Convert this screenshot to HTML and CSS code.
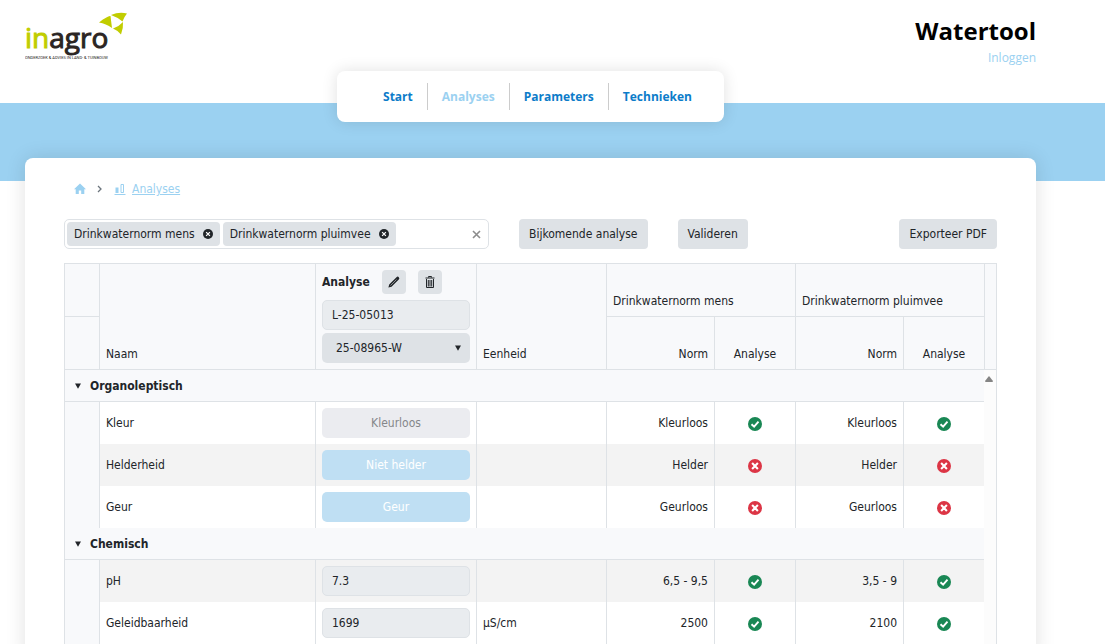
FILE: index.html
```html
<!DOCTYPE html>
<html lang="nl">
<head>
<meta charset="utf-8">
<title>Watertool - Analyses</title>
<link rel="stylesheet" href="styles.css">
</head>
<body>
<svg class="sprite" aria-hidden="true">
  <symbol id="ok" viewBox="0 0 16 16"><circle cx="8" cy="8" r="8" fill="#198754"/><path d="M4 8.2 7 11l5-5.600" fill="none" stroke="#fff" stroke-width="2.200"/></symbol>
  <symbol id="bad" viewBox="0 0 16 16"><circle cx="8" cy="8" r="8" fill="#dc3545"/><path d="m4.700 4.700 6.600 6.600M11.300 4.700l-6.600 6.600" fill="none" stroke="#fff" stroke-width="2.400"/></symbol>
  <symbol id="remove" viewBox="0 0 16 16"><circle cx="8" cy="8" r="8" fill="#212529"/><path d="m5 5 6 6M11 5l-6 6" fill="none" stroke="#fff" stroke-width="2"/></symbol>
  <symbol id="caret" viewBox="0 0 8 8"><path d="M1 1.500h6L4 6.800z" fill="#212529"/></symbol>
</svg>
<div class="page">
  <header class="header">
    <a class="logo" href="#" aria-label="Inagro">
      <svg width="104" height="52" viewBox="0 0 104 52">
        <text class="logo-name" x="0" y="37"><tspan class="logo-green">in</tspan><tspan class="logo-dark">agro</tspan></text>
        <path d="M74 11.500C80 6 86 4.500 85.500 5L87 17Q81 12.500 74 11.500zM86 4Q94 .5 102 2.500 99 6 97.500 10.500 92 6 86 4zM98 11Q98.500 17 96 23.500 92 19 88 17.500 94 15.500 98 11z" fill="#c1cd00"/>
        <text class="logo-tagline" x="0" y="48">ONDERZOEK &amp; ADVIES IN LAND- &amp; TUINBOUW</text>
      </svg>
    </a>
    <div class="brand">
      <h1 class="brand-title">Watertool</h1>
      <a class="login" href="#">Inloggen</a>
    </div>
  </header>
  <div class="band">
    <nav class="nav">
      <a class="nav-link" href="#">Start</a>
      <a class="nav-link active" href="#">Analyses</a>
      <a class="nav-link" href="#">Parameters</a>
      <a class="nav-link" href="#">Technieken</a>
    </nav>
  </div>
  <main class="card">
    <nav class="crumbs" aria-label="Kruimelpad">
      <a class="crumb" href="#" aria-label="Start"><svg width="12" height="12" viewBox="0 0 12 12"><path d="M6 .5 12 6.300h-1.700V11H7.200V7.500H4.800V11H1.700V6.300H0z" fill="#9bd1f1"/></svg></a>
      <svg width="6" height="8" viewBox="0 0 6 8"><path d="m1 1 3 3-3 3" fill="none" stroke="#6c757d" stroke-width="1.300"/></svg>
      <a class="crumb crumb-text" href="#"><svg width="12" height="12" viewBox="0 0 12 12"><path d="M1.500 4.500h3V10h-3z" fill="#9bd1f1"/><path d="M7 1.500h2.500v8H7zM.5 11.500h11" fill="none" stroke="#9bd1f1"/></svg><span>Analyses</span></a>
    </nav>
    <div class="toolbar">
      <div class="picker">
        <span class="chip">Drinkwaternorm mens<button class="icon-button" aria-label="Verwijder mens"><svg width="10" height="10"><use href="#remove"/></svg></button></span>
        <span class="chip">Drinkwaternorm pluimvee<button class="icon-button" aria-label="Verwijder pluimvee"><svg width="10" height="10"><use href="#remove"/></svg></button></span>
        <input class="picker-input" type="text" aria-label="Normen">
        <button class="icon-button" aria-label="Alles wissen"><svg width="9" height="9" viewBox="0 0 9 9"><path d="m1 1 7 7M8 1 1 8" stroke="#8c8c8c" stroke-width="1.600"/></svg></button>
      </div>
      <button class="button">Bijkomende analyse</button>
      <button class="button">Valideren</button>
      <button class="button export">Exporteer PDF</button>
    </div>
    <table class="grid">
      <colgroup><col class="c-indent"><col><col class="c-value"><col class="c-unit"><col class="c-norm"><col class="c-check"><col class="c-norm"><col class="c-check"><col class="c-scroll"></colgroup>
      <thead>
        <tr class="head-row">
          <td class="split"></td>
          <th rowspan="2">Naam</th>
          <th rowspan="2">
            <div class="analysis">
              <div class="analysis-title"><strong>Analyse</strong>
                <button class="button square" aria-label="Bewerken"><svg width="12" height="12" viewBox="0 0 12 12"><path d="M.4 11.600 1.200 8.500 8.500 1.200q1.200-1.200 2.300 0t0 2.300L3.500 10.800z" fill="#212529"/><path d="m2.500 9.500 6-6" stroke="#8b8e91"/></svg></button>
                <button class="button square" aria-label="Verwijderen"><svg width="10" height="12" viewBox="0 0 10 12"><path d="M.5 2h9M3.500 1.500v-1h3v1M1.500 3v8.500h7V3" fill="none" stroke="#212529"/><path d="M3.300 4v6.500M5 4v6.500M6.700 4v6.500" stroke="#212529"/></svg></button>
              </div>
              <input class="field" type="text" value="L-25-05013" aria-label="Labonummer" readonly>
              <div class="select-wrap"><select class="select" aria-label="Staal"><option>25-08965-W</option></select><svg width="8" height="8"><use href="#caret"/></svg></div>
            </div>
          </th>
          <th rowspan="2">Eenheid</th>
          <th class="split" colspan="2">Drinkwaternorm mens</th>
          <th class="split" colspan="2">Drinkwaternorm pluimvee</th>
          <td rowspan="2"></td>
        </tr>
        <tr class="head-row">
          <td></td><th class="right">Norm</th><th class="center">Analyse</th><th class="right">Norm</th><th class="center">Analyse</th>
        </tr>
      </thead>
      <tbody>
        <tr class="group">
          <th colspan="8"><button class="group-toggle" aria-expanded="true"><svg width="8" height="8"><use href="#caret"/></svg>Organoleptisch</button></th>
          <td class="scroll" rowspan="7"><svg width="8" height="6" viewBox="0 0 8 6"><path d="M4 0 8 5q0 1-1 1H1Q0 6 0 5z" fill="#858585"/></svg></td>
        </tr>
        <tr><td class="indent"></td><td>Kleur</td><td><button class="value" disabled>Kleurloos</button></td><td></td><td class="right">Kleurloos</td><td class="center"><svg width="14" height="14"><use href="#ok"/></svg></td><td class="right">Kleurloos</td><td class="center"><svg width="14" height="14"><use href="#ok"/></svg></td></tr>
        <tr class="odd"><td class="indent"></td><td>Helderheid</td><td><button class="value blue" disabled>Niet helder</button></td><td></td><td class="right">Helder</td><td class="center"><svg width="14" height="14"><use href="#bad"/></svg></td><td class="right">Helder</td><td class="center"><svg width="14" height="14"><use href="#bad"/></svg></td></tr>
        <tr><td class="indent"></td><td>Geur</td><td><button class="value blue" disabled>Geur</button></td><td></td><td class="right">Geurloos</td><td class="center"><svg width="14" height="14"><use href="#bad"/></svg></td><td class="right">Geurloos</td><td class="center"><svg width="14" height="14"><use href="#bad"/></svg></td></tr>
        <tr class="group"><th colspan="8"><button class="group-toggle" aria-expanded="true"><svg width="8" height="8"><use href="#caret"/></svg>Chemisch</button></th></tr>
        <tr class="odd"><td class="indent"></td><td>pH</td><td><input class="field" type="text" value="7.3" aria-label="pH" readonly></td><td></td><td class="right">6,5 - 9,5</td><td class="center"><svg width="14" height="14"><use href="#ok"/></svg></td><td class="right">3,5 - 9</td><td class="center"><svg width="14" height="14"><use href="#ok"/></svg></td></tr>
        <tr><td class="indent"></td><td>Geleidbaarheid</td><td><input class="field" type="text" value="1699" aria-label="Geleidbaarheid" readonly></td><td>µS/cm</td><td class="right">2500</td><td class="center"><svg width="14" height="14"><use href="#ok"/></svg></td><td class="right">2100</td><td class="center"><svg width="14" height="14"><use href="#ok"/></svg></td></tr>
      </tbody>
    </table>
  </main>
</div>
</body>
</html>
```
FILE: styles.css
```css
* { box-sizing: border-box; }
body {
  margin: 0;
  background: #fff;
  color: #212529;
  font: 12px/18px "DejaVu Sans Condensed", "DejaVu Sans", sans-serif;
}
button, input, select { font: inherit; color: inherit; }
svg { display: block; }
.sprite { position: absolute; width: 0; height: 0; }
.page { height: 100vh; overflow: hidden; }

.header {
  display: flex;
  justify-content: space-between;
  min-height: 103px;
  padding: 11px 69px 0 25px;
  font-family: "Open Sans", "Noto Sans", sans-serif;
}
.logo-name { font: 500 28px "Open Sans", sans-serif; stroke-width: 1px; }
.logo-green { fill: #c1cd00; stroke: #c1cd00; }
.logo-dark { fill: #2b2523; stroke: #2b2523; }
.logo-tagline { font: 4px Roboto, sans-serif; fill: #2b2523; }
.brand { text-align: right; }
.brand-title { margin: 4px 0 2px; color: #000; font-size: 24px; line-height: 32px; font-weight: 700; }
.login { display: block; color: #9bd1f1; text-decoration: none; }

.band {
  display: flex;
  justify-content: center;
  align-items: flex-start;
  height: 78px;
  padding: 0 69px 0 25px;
  background: #9bd1f1;
}
.nav {
  display: flex;
  margin-top: -32px;
  padding: 12px 18px 12px 32px;
  border-radius: 8px;
  background: #fff;
  box-shadow: 0 0 16px rgba(0, 0, 0, .12);
  font: 700 12px/27px "Open Sans", "Noto Sans", sans-serif;
}
.nav-link { padding: 0 14px; color: #0c7cc9; text-decoration: none; }
.nav-link + .nav-link { border-left: 1px solid #ccc; }
.nav-link.active { color: #9bd1f1; }

.card {
  margin: -23px 69px 0 25px;
  padding: 22px 39px 20px;
  border-radius: 8px;
  background: #fff;
  box-shadow: 0 0 20px rgba(0, 0, 0, .12);
}
.crumbs { display: flex; align-items: center; gap: 11px; padding-left: 10px; }
.crumb { display: flex; align-items: center; gap: 6px; color: #9bd1f1; }

.toolbar { display: flex; gap: 30px; margin: 21px 0 14px; }
.picker {
  display: flex;
  align-items: center;
  gap: 3px;
  flex: 0 1 425px;
  min-width: 0;
  padding: 0 7px 0 2px;
  border: 1px solid #dee2e6;
  border-radius: 5px;
}
.chip {
  display: flex;
  align-items: center;
  gap: 8px;
  height: 24px;
  padding: 0 7px;
  border-radius: 4px;
  background: #dee2e6;
  white-space: nowrap;
}
.icon-button { padding: 0; border: 0; background: none; }
.picker-input { flex: 1; min-width: 0; border: 0; background: none; }
.button {
  height: 30px;
  padding: 0 10px;
  border: 0;
  border-radius: 4px;
  background: #dee2e6;
  white-space: nowrap;
}
.export { margin-left: auto; }
.square { display: grid; place-items: center; width: 24px; height: 24px; padding: 0; }

.grid {
  width: 100%;
  table-layout: fixed;
  border: solid #dee2e6;
  border-width: 1px 1px 0;
  border-spacing: 0;
}
.c-indent { width: 34px; }
.c-value { width: 161px; }
.c-unit { width: 130px; }
.c-norm { width: 108px; }
.c-check { width: 81px; }
.c-scroll { width: 12px; }
th, td { padding: 0 6px; font-weight: 400; text-align: left; border-left: 1px solid #dee2e6; }
tr > :first-child { border-left: 0; }
thead tr:last-child th:nth-child(2) { border-left: 1px solid #dee2e6; }
tbody tr { height: 42px; }
thead th, thead td { padding-bottom: 6px; vertical-align: bottom; background: #f8f9fb; border-bottom: 1px solid #dee2e6; }
.head-row { height: 52px; }
th.right, td.right { text-align: right; }
th.center { text-align: center; }
td.center svg { margin: 1px auto 0; }
.analysis { display: grid; gap: 3px; padding-top: 6px; }
.analysis-title { display: flex; align-items: center; gap: 12px; margin-bottom: 3px; }
.field, .select, .value { display: block; width: 100%; height: 30px; border-radius: 5px; }
.field { padding: 0 9px; border: 1px solid #dee2e6; background: #e9ecef; }
.select-wrap { display: grid; align-items: center; justify-items: end; }
.select-wrap > * { grid-area: 1 / 1; }
.select-wrap svg { margin-right: 8px; pointer-events: none; }
.select { padding: 0 14px; border: 0; background: #dee2e6; appearance: none; }
.value { border: 0; background: #ebecf0; color: #85878a; }
.value.blue { background: #bfdff3; color: #fff; }
.odd { background: #f3f3f3; }
tbody .group { height: 32px; }
.group th { padding: 0; border-bottom: 1px solid #dee2e6; background: #f8f9fb; }
.group-toggle { display: flex; align-items: center; gap: 8px; padding: 0 9px; border: 0; background: none; font-weight: 700; }
.indent { background: #f8f9fb; }
.scroll { padding: 6px 0 0 1px; border-left: 0; vertical-align: top; background: #fcfcfc; }
```
